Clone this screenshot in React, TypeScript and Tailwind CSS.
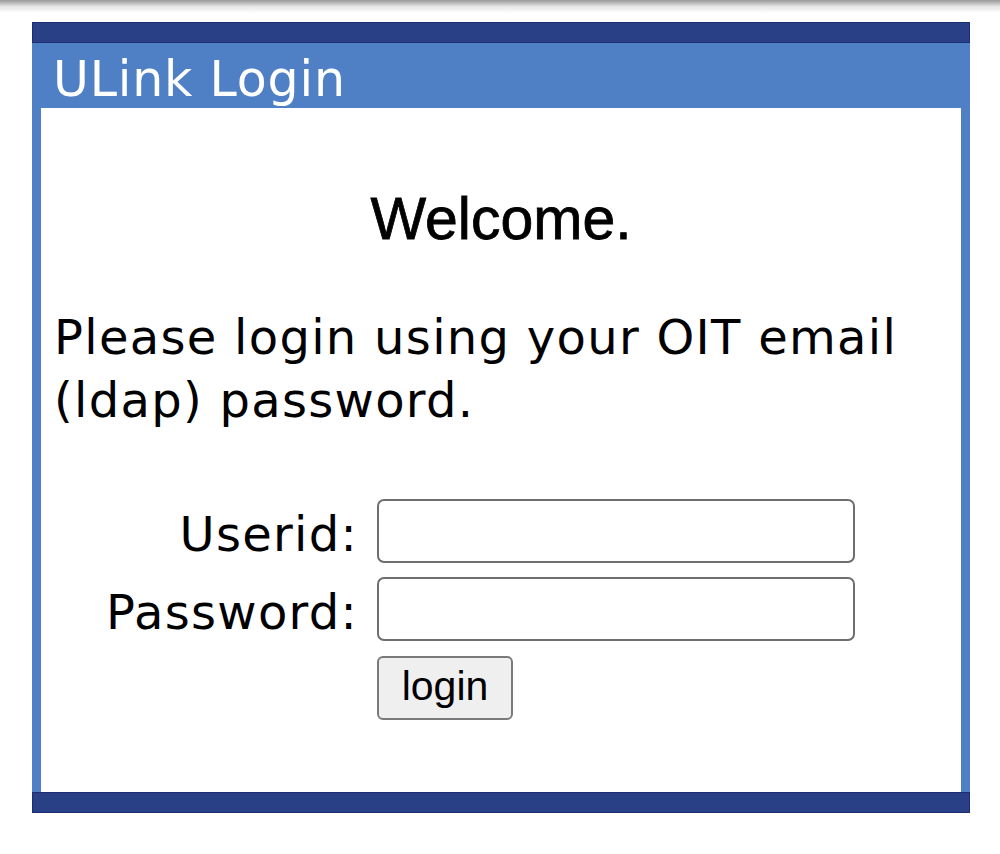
const verdana = { fontFamily: '"DejaVu Sans", Verdana, sans-serif' };

const LoginField = ({ label, type }: { label: string; type: string }) => {
  return (
    <div className="flex items-center h-[64px]">
      <label
        className="w-[336px] pr-[19px] pt-[6px] text-right text-[48px] tracking-[1.3px] text-black leading-none"
        style={verdana}
      >
        {label}:
      </label>
      <input
        type={type}
        className="w-[478px] h-[64px] border-2 border-[#6e6e6e] rounded-[7px] bg-white"
      />
    </div>
  );
};

const App = () => {
  return (
    <div className="min-h-[854px] w-[1000px] bg-white">
      <div className="h-[13px] bg-gradient-to-b from-[#9a9a9a] via-[#e6e6e6] to-white" />

      <div className="ml-[32px] mt-[9px] w-[938px]">
        <div className="h-[21px] bg-[#293f86] border border-[#1d2d73]" />
        <div className="h-[65px] bg-[#4f7fc5] pl-[21px] flex items-center">
          <h1
            className="text-[49px] tracking-[0.8px] text-white leading-none pt-[7px]"
            style={verdana}
          >
            ULink Login
          </h1>
        </div>

        <div className="border-x-[9px] border-[#4f7fc5] bg-white h-[684px] flex flex-col">
          <h2
            className="text-center text-[59px] text-black leading-none mt-[82px]"
            style={{ fontFamily: '"Liberation Sans", Arial, sans-serif', WebkitTextStroke: "0.8px black" }}
          >
            Welcome.
          </h2>

          <p
            className="mt-[57px] pl-[13px] text-[48px] tracking-[1.3px] leading-[63px] text-black"
            style={verdana}
          >
            Please login using your OIT email
            <br />
            (ldap) password.
          </p>

          <form className="mt-[67px] flex flex-col gap-[14px]" onSubmit={(e) => e.preventDefault()}>
            <LoginField label="Userid" type="text" />
            <LoginField label="Password" type="password" />
            <div className="pl-[336px] mt-[1px]">
              <button
                type="submit"
                className="w-[136px] h-[64px] bg-[#efefef] border-2 border-[#7a7a7a] rounded-[6px] text-[41px] text-black leading-none pb-[4px]"
                style={{ fontFamily: '"Liberation Sans", Arial, sans-serif' }}
              >
                login
              </button>
            </div>
          </form>
        </div>

        <div className="h-[21px] bg-[#293f86] border border-[#1d2d73]" />
      </div>
    </div>
  );
};

export default App;
